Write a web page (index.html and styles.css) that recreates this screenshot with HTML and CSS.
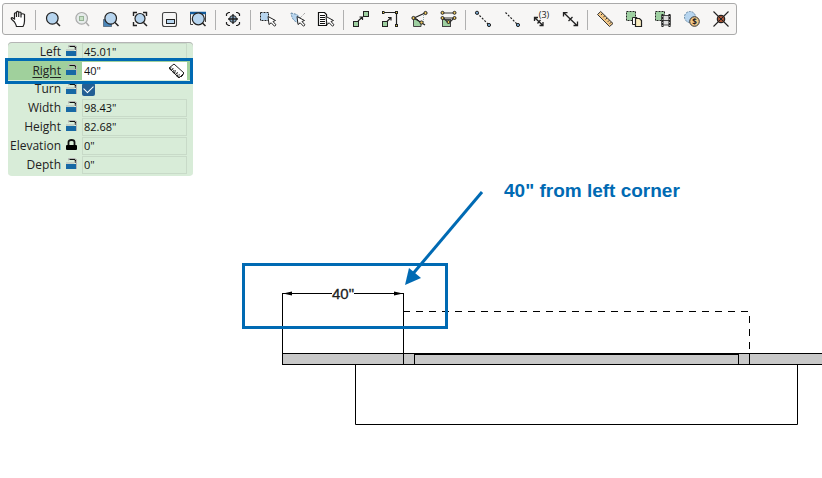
FILE: index.html
```html
<!DOCTYPE html>
<html lang="en">
<head>
<meta charset="utf-8">
<title>Plan editor</title>
<link rel="stylesheet" href="styles.css">
</head>
<body>
<svg class="defs" aria-hidden="true">
  <symbol id="cursor" viewBox="0 0 10 11" overflow="visible">
    <path d="M1 0.5 2 8.500 4.200 6.800 7.500 10.200 9 8.800 6 5.500 8.500 4.500Z" fill="#fff" stroke="#222" stroke-width="1"/>
  </symbol>
  <symbol id="unlocked" viewBox="0 0 13 13">
    <path d="M3.500 2.500V0.500H10.500" fill="none" stroke="#b5b5b5"/>
    <path d="M4.500 1.500H9.500L11 3V5" fill="none" stroke="#111" stroke-width="1.200"/>
    <path d="M9.500 2.500V5M1 5H9" stroke="#b5b5b5"/>
    <path d="M11.500 1V11" stroke="#b5b5b5"/>
    <rect x="1" y="6" width="10" height="5" fill="#1769a5"/>
  </symbol>
  <symbol id="locked" viewBox="0 0 13 13">
    <path d="M3.500 6V3Q3.500 1 6.500 1T9.500 3V6" fill="none" stroke="#111" stroke-width="1.800"/>
    <rect x="1" y="6" width="11" height="5" rx="1" fill="#000"/>
  </symbol>
</svg>
<main class="stage">
  <svg class="plan" role="img" aria-label="Wall plan">
    <g class="ink">
      <rect class="wall" x="282.5" y="353.5" width="100%" height="11"/>
      <path d="M403.500 293V364M282.500 293V364M414.500 353V364M738.500 353V364M749.500 353V364"/>
      <path class="heavy" d="M414 354H739"/>
      <path d="M355.500 364V424.500H797.500V364"/>
      <path d="M282 293.500H332M354 293.500H403"/>
      <path class="dash" d="M403 311.500H749.500V353"/>
    </g>
    <path d="M283 293.500 292 291.500V295.500ZM403 293.500 394 291.500V295.500Z"/>
    <text class="dim" x="343" y="299">40"</text>
    <rect class="frame" x="243.500" y="264.500" width="203" height="63"/>
    <path class="pointer" d="M482 192 411 276"/>
    <path class="tip" d="M405 285 409 268 421 278Z"/>
    <text class="note" x="504" y="197">40" from left corner</text>
  </svg>

  <div class="toolbar" role="toolbar" aria-label="Tools">
    <button aria-label="Pan"><svg viewBox="0 0 29 30"><path d="M10.500 18 7.500 15.200Q6.800 13.800 8.200 13.700L10.500 15V9.500Q11.300 8 12.500 9.500V13 8.200Q13.500 6.700 14.700 8.200V13 8.700Q15.800 7.300 17 8.700V13.500 10.500Q18.500 9 20.500 10.500V17Q20.500 20 19 22.500H12.500Q12 20.500 10.500 18Z" fill="#fff" stroke="#222" stroke-width="1.200"/></svg></button>
    <span class="sep"></span>
    <button aria-label="Zoom"><svg viewBox="0 0 29 30"><circle cx="13.300" cy="14.300" r="5.800" fill="#b7d5ef" stroke="#222" stroke-width="1.200"/><path d="M17.500 18.500 21 22" stroke="#222" stroke-width="1.500"/></svg></button>
    <button aria-label="Zoom to selection" disabled><svg viewBox="0 0 29 30"><circle cx="13.700" cy="14.300" r="5.800" fill="#e6ebea" stroke="#aaa" stroke-width="1.200"/><rect x="11.500" y="12.500" width="4" height="4" fill="#c7e0c5" stroke="#98b396"/><path d="M18 18.500 21 22" stroke="#aaa" stroke-width="1.500"/></svg></button>
    <button aria-label="Zoom area"><svg viewBox="0 0 29 30"><rect x="6.500" y="15.500" width="8" height="7" fill="#4b86b9" stroke="#234" stroke-dasharray="1 1"/><circle cx="13.700" cy="14.300" r="5.800" fill="#b7d5ef" stroke="#222" stroke-width="1.200"/><path d="M18 18.500 21.500 22" stroke="#222" stroke-width="1.500"/></svg></button>
    <button aria-label="Zoom to fit"><svg viewBox="0 0 29 30"><path d="M7.500 12V8.500H11M17 8.500H20.500V12M7.500 18V21.500H11" fill="none" stroke="#222" stroke-width="1.400"/><circle cx="14" cy="14.500" r="5" fill="#b7d5ef" stroke="#222" stroke-width="1.200"/><path d="M17.500 18.500 21 22" stroke="#222" stroke-width="1.500"/></svg></button>
    <button aria-label="Overview"><svg viewBox="0 0 29 30"><rect x="7.500" y="8.500" width="14" height="14" rx="2" fill="#f5f5f5" stroke="#444" stroke-width="1.100"/><rect x="11.500" y="15.500" width="8" height="4" fill="#b7d5ef" stroke="#222"/></svg></button>
    <button aria-label="Zoom window"><svg viewBox="0 0 29 30"><path d="M9 20.500H6.500V9M21.500 9V18" fill="none" stroke="#444"/><path d="M6 9H22" stroke="#135b9b" stroke-width="2.500"/><circle cx="14.300" cy="14.800" r="6" fill="#b7d5ef" stroke="#222" stroke-width="1.200"/><path d="M18.500 19 21.500 22" stroke="#222" stroke-width="1.500"/></svg></button>
    <span class="sep"></span>
    <button aria-label="Center"><svg viewBox="0 0 29 30"><path d="M7.500 12V10L9.500 8.500H11M17 8.500H18.500L20.500 10V12M20.500 18V20L18.500 21.500H17M11 21.500H9.500L7.500 20V18" fill="none" stroke="#222" stroke-width="1.200"/><circle cx="14" cy="15" r="3.500" fill="#8caecb" stroke="#222"/><path d="M14 10V20M9 15H19" stroke="#222" stroke-width="1.300"/></svg></button>
    <span class="sep"></span>
    <button aria-label="Select area"><svg viewBox="0 0 29 30"><rect x="6.500" y="8.500" width="8" height="8" fill="#b7d5ef" stroke="#222" stroke-dasharray="2 1"/><use href="#cursor" x="13" y="12" width="10" height="11"/></svg></button>
    <button aria-label="Select lasso"><svg viewBox="0 0 29 30"><path d="M8 9 14 10.500 17 14 15 18.500Q9 17 8 9Z" fill="#b7d5ef" stroke="#6688a4" stroke-dasharray="2 1"/><path d="M17 14 22 9" stroke="#888" stroke-dasharray="1 1"/><use href="#cursor" x="13" y="12" width="10" height="11"/></svg></button>
    <button aria-label="Select from list"><svg viewBox="0 0 29 30"><path d="M14.500 21.500H6.500V8.500H12.500L14.500 10.500Z" fill="#fff" stroke="#111" stroke-width="1.200"/><path d="M8 11.500H13M8 13.500H13M8 15.500H13M8 17.500H13M8 19.500H13" stroke="#111"/><use href="#cursor" x="13" y="12" width="10" height="11"/></svg></button>
    <span class="sep"></span>
    <button aria-label="Move"><svg viewBox="0 0 29 30"><rect x="6.500" y="17.500" width="5" height="5" fill="#9ed0a1" stroke="#222"/><rect x="16.500" y="7.500" width="5" height="5" fill="#9ed0a1" stroke="#222"/><path d="M11 17 15.500 13M12.500 13H15.500V16" fill="none" stroke="#222" stroke-width="1.200"/></svg></button>
    <button aria-label="Move by distance"><svg viewBox="0 0 29 30"><rect x="6.500" y="17.500" width="5" height="5" fill="#9ed0a1" stroke="#222"/><path d="M11 17.500 15 13.500M12 13.500H15V16.500M7 8.500H20.500V21.500" fill="none" stroke="#222" stroke-width="1.200"/><g fill="#e7d04b" stroke="#222"><rect x="6.500" y="7.500" width="1.500" height="2"/><rect x="19.500" y="7.500" width="2" height="2"/><rect x="19.500" y="20.500" width="2" height="2"/></g></svg></button>
    <button aria-label="Rotate"><svg viewBox="0 0 29 30"><path d="M8.500 15H12L16 19V22.500H8.500Z" fill="#9ed0a1" stroke="#444"/><path d="M9 14 20 9M9 14 20 21" stroke="#222" stroke-width="1.300"/><path d="M18.500 11V18" stroke="#8aa" stroke-dasharray="1 1"/><g fill="#ecc65b" stroke="#222"><circle cx="8.500" cy="14" r="1.600"/><circle cx="20.500" cy="9" r="1.600"/><circle cx="16.500" cy="18.500" r="1.600"/></g></svg></button>
    <button aria-label="Align"><svg viewBox="0 0 29 30"><rect x="8.500" y="15.500" width="8" height="7" fill="#9ed0a1" stroke="#444"/><path d="M9 9H20M9 14H20M9 14 15 19 20 14" fill="none" stroke="#333" stroke-width="1.200"/><g fill="#ecc65b" stroke="#222"><circle cx="8.500" cy="8.800" r="1.500"/><circle cx="20.500" cy="8.800" r="1.500"/><circle cx="8.500" cy="14" r="1.500"/><circle cx="20.500" cy="14" r="1.500"/><circle cx="14.500" cy="18" r="1.500"/></g></svg></button>
    <span class="sep"></span>
    <button aria-label="Line between points"><svg viewBox="0 0 29 30"><path d="M8 9 20 21" stroke="#222" stroke-width="1.200" stroke-dasharray="2 1.500"/><g fill="#79a9d0" stroke="#222"><circle cx="8" cy="8.800" r="1.600"/><circle cx="20" cy="21" r="1.600"/></g></svg></button>
    <button aria-label="Line to point"><svg viewBox="0 0 29 30"><path d="M7.500 8.500 20 21" stroke="#222" stroke-width="1.200" stroke-dasharray="2 1.500"/><circle cx="20" cy="21" r="1.600" fill="#79a9d0" stroke="#222"/></svg></button>
    <button aria-label="Divide by three"><svg viewBox="0 0 29 30"><path d="M7.500 13.500 16 21.500M7.500 17V13.500H11M12.500 21.500H16V18M10.500 19.500 13.500 16" fill="none" stroke="#222" stroke-width="1.300"/><text class="count" x="17" y="14">(3)</text></svg></button>
    <button aria-label="Measure"><svg viewBox="0 0 29 30"><path d="M8 9 21 21.500M7.500 12.500V8.700H11.500M17.500 21.500H21.500V17.500M12.500 17 16.500 13" fill="none" stroke="#222" stroke-width="1.300"/></svg></button>
    <span class="sep"></span>
    <button aria-label="Ruler"><svg viewBox="0 0 29 30"><path d="M6.500 10.500 9.700 7.500 22 19.500 18.500 22.500Z" fill="#f3c887" stroke="#333"/><path d="M11.500 9.500 10 11M13.800 11.800 12.300 13.300M16 14 14.500 15.500M18.300 16.300 16.800 17.800M20.200 18.200 18.700 19.700" stroke="#333"/></svg></button>
    <button aria-label="Copy"><svg viewBox="0 0 29 30"><rect x="6.500" y="7.500" width="9" height="9" fill="#9ed0a1" stroke="#222" stroke-dasharray="2 1"/><path d="M12.500 13.500H17L18 20.500H12.500Z" fill="#fff" stroke="#222"/><path d="M15.500 14.500H19.500L21.500 16.500V22.500H15.500Z" fill="#faedc0" stroke="#222" stroke-width="1.200"/></svg></button>
    <button aria-label="Array"><svg viewBox="0 0 29 30"><rect x="6.500" y="7.500" width="9" height="9" fill="#9ed0a1" stroke="#222" stroke-dasharray="2 1"/><path d="M13 11.500H21V21H13ZM13 16.500H21" fill="#ddd" stroke="#444" stroke-width="1.200"/><path d="M13.500 10V23M20.500 10V23" stroke="#222" stroke-width="2"/><path d="M13.500 12V22M20.500 12V22" stroke="#999" stroke-dasharray="1 2"/></svg></button>
    <button aria-label="Price"><svg viewBox="0 0 29 30"><circle cx="12" cy="13" r="5.500" fill="#b7d5ef" stroke="#6688a4" stroke-dasharray="2 1"/><circle cx="16.500" cy="17.500" r="4.800" fill="#f3c887" stroke="#333"/><text class="coin" x="16.500" y="20.500">$</text></svg></button>
    <button aria-label="Break apart"><svg viewBox="0 0 29 30"><path d="M6.500 7.500 21.500 22.500M21.500 7.500 6.500 22.500" stroke="#222" stroke-width="1.100"/><circle cx="14" cy="15" r="3.700" fill="#a65336" stroke="#222" stroke-width="1.200"/><path d="M11.500 12.500 16.500 17.500M16.500 12.500 11.500 17.500" stroke="#222"/></svg></button>
  </div>

  <form class="panel">
    <div class="row"><label for="left">Left</label><svg class="lock"><use href="#unlocked"/></svg><input id="left" type="text" value='45.01"'></div>
    <div class="row active"><label for="right">Right</label><svg class="lock"><use href="#unlocked"/></svg><input id="right" type="text" value='40"'>
      <svg class="gauge" viewBox="0 0 17 17"><path d="M1 5 6 1 16 10 11 15Z" fill="#fff" stroke="#222"/><path d="M2 5 11 14" stroke="#222" stroke-width="2.500" stroke-dasharray="1 1"/><path d="M4.500 5.500 11.500 12" stroke="#222" stroke-width="1.500" stroke-dasharray="1 2"/><path d="M13 14 15.500 11.500" stroke="#222"/></svg></div>
    <div class="row tick"><label for="turn">Turn</label><svg class="lock"><use href="#unlocked"/></svg><input id="turn" type="checkbox" checked></div>
    <div class="row"><label for="width">Width</label><svg class="lock"><use href="#unlocked"/></svg><input id="width" type="text" value='98.43"'></div>
    <div class="row"><label for="height">Height</label><svg class="lock"><use href="#unlocked"/></svg><input id="height" type="text" value='82.68"'></div>
    <div class="row"><label for="elevation">Elevation</label><svg class="lock"><use href="#locked"/></svg><input id="elevation" type="text" value='0"'></div>
    <div class="row"><label for="depth">Depth</label><svg class="lock"><use href="#unlocked"/></svg><input id="depth" type="text" value='0"'></div>
  </form>
</main>
</body>
</html>
```
FILE: styles.css
```css
* { box-sizing: border-box; }

body {
  margin: 0;
  background: #fff;
  font: 12px "Open Sans", "Noto Sans", sans-serif;
  color: #222;
}

.defs { position: absolute; width: 0; height: 0; }

.stage {
  position: relative;
  min-height: 100vh;
  padding: 3px 2px;
  overflow: hidden;
  display: flex;
  flex-direction: column;
  align-items: flex-start;
  gap: 7px;
}

/* drawing canvas behind the tools */
.plan { position: absolute; inset: 0; width: 100%; height: 100%; }
.ink { fill: none; stroke: #000; stroke-width: 1; }
.wall { fill: #c8c8c8; }
.heavy { stroke-width: 2; }
.dash { stroke-dasharray: 7 6; }
.dim { font: 15px "Liberation Sans", Arial, sans-serif; text-anchor: middle; fill: #222; stroke: #222; stroke-width: 0.3; }
.frame { fill: none; stroke: #006ab3; stroke-width: 3; }
.pointer { stroke: #006ab3; stroke-width: 3; }
.tip { fill: #006ab3; }
.note { font: bold 19px "Liberation Sans", Arial, sans-serif; fill: #006ab3; }

.toolbar {
  position: relative;
  display: flex;
  padding-left: 1px;
  border: 1px solid #aaa;
  border-radius: 3px;
  background: #f7f6f5;
}
.toolbar button { width: 29px; height: 30px; padding: 0; border: 0; background: none; }
.toolbar svg { display: block; width: 29px; height: 30px; fill: none; }
.sep { width: 6px; padding: 6px 3px 4px 2px; }
.sep::before { content: ""; display: block; height: 100%; background: #b0b0b0; }
.toolbar text { fill: #222; text-anchor: middle; }
.count { font: 9px "Open Sans", sans-serif; }
.coin { font: bold 8px "Open Sans", sans-serif; }

.panel {
  position: relative;
  margin-left: 6px;
  padding-bottom: 2px;
  border-radius: 4px;
  background: #d8ecd8;
  box-shadow: inset 0 1px #b5b5b5;
}
.row {
  position: relative;
  display: grid;
  grid-template-columns: 53px 13px 105px;
  column-gap: 4px;
  align-items: center;
  height: 19px;
  padding-right: 6px;
}
.row label { justify-self: end; line-height: 18px; white-space: nowrap; }
.lock { width: 13px; height: 13px; }
.row input[type="text"] {
  width: 100%;
  height: 18px;
  padding: 0 1px;
  border: 1px solid #c8dac8;
  background: transparent;
  color: #111;
  font: 11px "Open Sans", "Noto Sans", sans-serif;
}
.tick { height: 18px; }
.row input[type="checkbox"] {
  appearance: none;
  display: grid;
  place-items: center;
  width: 13px;
  height: 13px;
  margin: 0;
  border-radius: 2px;
  background: #235f94;
}
.row input[type="checkbox"]::after {
  content: "";
  width: 8px;
  height: 5px;
  margin-bottom: 2px;
  border: solid #fff;
  border-width: 0 0 1px 1px;
  transform: rotate(-45deg);
}
.active { background: #a0d09c; z-index: 1; }
.active label { text-decoration: underline; text-underline-offset: 2px; }
.row.active input { background: #fff; border-color: #fff; }
.active::after {
  content: "";
  position: absolute;
  inset: -3px 0 -4px -3px;
  border: 3px solid #006ab3;
  pointer-events: none;
}
.gauge { position: absolute; right: 8px; top: 2px; width: 17px; height: 17px; }
```
